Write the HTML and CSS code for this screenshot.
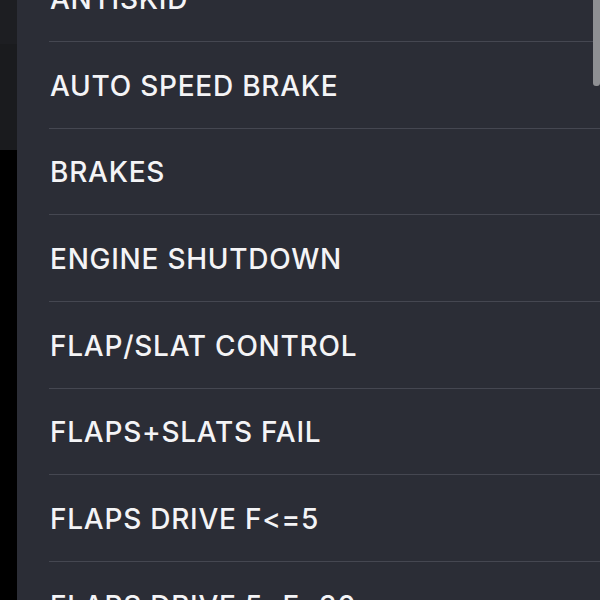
FILE: index.html
```html
<!DOCTYPE html>
<html>
<head>
<meta charset="utf-8">
<link rel="stylesheet" href="styles.css">
</head>
<body>
<div class="app">
  <div class="side">
    <div class="side-top"></div>
    <div class="side-mid"></div>
    <div class="side-bottom"></div>
  </div>
  <div class="panel">
    <ul class="list">
      <li class="item">ANTISKID</li>
      <li class="item">AUTO SPEED BRAKE</li>
      <li class="item">BRAKES</li>
      <li class="item">ENGINE SHUTDOWN</li>
      <li class="item">FLAP/SLAT CONTROL</li>
      <li class="item">FLAPS+SLATS FAIL</li>
      <li class="item">FLAPS DRIVE F&lt;=5</li>
      <li class="item">FLAPS DRIVE 5&lt;F&lt;30</li>
    </ul>
    <div class="scrollbar"></div>
  </div>
</div>
</body>
</html>
```
FILE: styles.css
```css
html, body {
  margin: 0;
  padding: 0;
  background: #000;
}
.app {
  display: flex;
  width: 600px;
  height: 600px;
  overflow: hidden;
}
.side {
  width: 17px;
  display: flex;
  flex-direction: column;
}
.side-top { height: 44px; background: #1d1e22; }
.side-mid { height: 106px; background: #1a1b1e; }
.side-bottom { flex: 1; background: #000; }
.panel {
  position: relative;
  flex: 1;
  background: #2b2d36;
  overflow: hidden;
}
.list {
  list-style: none;
  margin: -44.67px 0 0 32px;
  padding: 0;
}
.item {
  box-sizing: border-box;
  height: 86.67px;
  display: flex;
  align-items: center;
  padding-left: 1px;
  padding-top: 2px;
  border-bottom: 1px solid #454751;
  font-family: Inter, "Liberation Sans", sans-serif;
  font-weight: 500;
  font-size: 28px;
  color: #f4f4f6;
  letter-spacing: 0.75px;
  white-space: nowrap;
}
.scrollbar {
  position: absolute;
  top: 0;
  right: 0;
  width: 7px;
  height: 86px;
  background: #8e8f93;
  border-radius: 0 0 3px 3px;
}
```
